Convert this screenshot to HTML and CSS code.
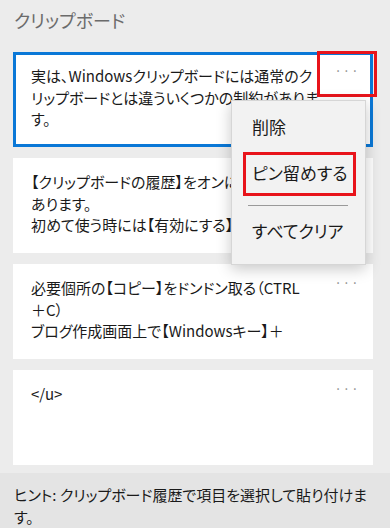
FILE: index.html
```html
<!DOCTYPE html>
<html lang="ja">
<head>
  <meta charset="UTF-8" />
  <meta name="viewport" content="width=device-width, initial-scale=1.0"/>
  <title>クリップボード</title>
  <link rel="stylesheet" href="styles.css">
</head>
<body>

<div class="panel">
  <h1 class="title">クリップボード</h1>

  <div class="list">
    <div class="item selected">
      <p class="item-text">実は、Windowsクリップボードには通常のクリップボードとは違ういくつかの制約があります。</p>
      <span class="more">···</span>
    </div>
    <div class="item">
      <p class="item-text">【クリップボードの履歴】をオンにする必要があります。<br>初めて使う時には【有効にする】をクリック</p>
      <span class="more">···</span>
    </div>
    <div class="item">
      <p class="item-text">必要個所の【コピー】をドンドン取る（CTRL<span class="nowrap">＋C）</span><br>ブログ作成画面上で【Windowsキー】＋</p>
      <span class="more">···</span>
    </div>
    <div class="item">
      <p class="item-text">&lt;/u&gt;</p>
      <span class="more">···</span>
    </div>
  </div>

  <div class="hint">ヒント: クリップボード履歴で項目を選択して貼り付けます。</div>

  <!-- annotation around the "..." button -->
  <div class="mark-more"></div>

  <div class="menu">
    <div class="menu-item">削除</div>
    <div class="menu-item marked">ピン留めする</div>
    <div class="menu-sep"></div>
    <div class="menu-item">すべてクリア</div>
  </div>
</div>

</body>
</html>
```

FILE: styles.css
```css
body {
  margin: 0;
  padding: 0;
  background-color: #ececec;
  font-family: "Noto Sans CJK JP", "Noto Sans", sans-serif;
  font-feature-settings: "palt";
  color: #1a1a1a;
}

.panel {
  position: relative;
  display: flex;
  flex-direction: column;
  width: 390px;
  height: 528px;
  overflow: hidden;
}

.title {
  margin: 0;
  padding: 8px 14px 0;
  font-size: 18px;
  line-height: 24px;
  font-weight: normal;
  color: #6b6b6b;
}

.list {
  display: flex;
  flex-direction: column;
  gap: 11px;
  padding: 20px 17px 0 13px;
}

.item {
  display: flex;
  box-sizing: border-box;
  height: 95px;
  padding: 10px 6px 10px 15px;
  background-color: #fff;
  border: 3px solid #fff;
}

.item.selected {
  border-color: #0a78d7;
}

.item-text {
  flex: 1;
  margin: 0;
  padding-right: 6px;
  font-size: 15px;
  line-height: 21.5px;
  overflow: hidden;
  max-height: 65px;
}

.nowrap {
  white-space: nowrap;
}

.more {
  width: 34px;
  margin-top: -2px;
  text-align: center;
  font-size: 13px;
  line-height: 16px;
  letter-spacing: 1px;
  color: #8a8a8a;
}

.hint {
  margin-top: auto;
  padding: 11px 14px 0;
  height: 55px;
  box-sizing: border-box;
  background-color: #e4e4e4;
  font-size: 15px;
  line-height: 22px;
  color: #1a1a1a;
}

.mark-more {
  position: absolute;
  left: 317px;
  top: 51px;
  width: 60px;
  height: 46px;
  box-sizing: border-box;
  border: 3px solid #e8141b;
}

.menu {
  position: absolute;
  left: 231px;
  top: 100px;
  width: 135px;
  box-sizing: border-box;
  padding: 5px 0 10px;
  background-color: #f2f2f2;
  border: 1px solid #d6d6d6;
  box-shadow: 0 4px 14px rgba(0, 0, 0, 0.22);
}

.menu-item {
  box-sizing: border-box;
  height: 44px;
  margin: 0 9px 0 11px;
  padding-left: 6px;
  border: 3px solid transparent;
  font-size: 17px;
  line-height: 36px;
  color: #1a1a1a;
}

.menu-item + .menu-item {
  margin-top: 2px;
}

.menu-item.marked {
  border-color: #e8141b;
}

.menu-sep {
  height: 1px;
  margin: 9px 17px 4px 16px;
  background-color: #9a9a9a;
}
```
